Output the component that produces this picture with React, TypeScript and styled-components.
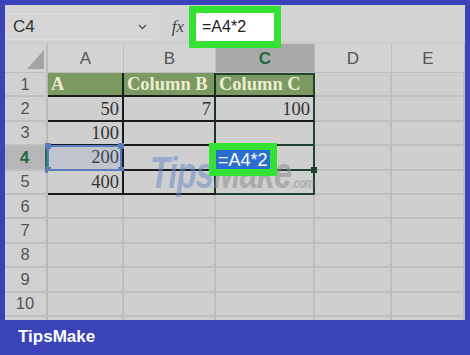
import React from "react";
import styled, { createGlobalStyle, css } from "styled-components";

const GlobalStyle = createGlobalStyle`
  html, body {
    margin: 0;
    padding: 0;
    background: #3a44b8;
  }
  body {
    width: 470px;
    height: 355px;
    overflow: hidden;
    font-family: "Liberation Sans", Arial, sans-serif;
  }
`;

const Frame = styled.div`
  width: 470px;
  height: 355px;
  box-sizing: border-box;
  padding: 5px 5px 0 5px;
  background: #3a44b8;
  display: flex;
  flex-direction: column;
`;

const Window = styled.div`
  height: 315px;
  background: #cfcfcf;
  display: flex;
  flex-direction: column;
  position: relative;
`;

const Toolbar = styled.div`
  height: 39px;
  flex: none;
  box-sizing: border-box;
  display: flex;
  align-items: flex-start;
  padding-top: 8px;
  background: #d4d4d4;
  border-bottom: 3px solid #cdcdcd;
`;

const NameBox = styled.div`
  width: 148px;
  height: 27px;
  box-sizing: border-box;
  display: flex;
  align-items: center;
  justify-content: space-between;
  padding: 0 6px 0 8px;
  background: #d6d6d6;
  border-top: 1px solid #e0e0e0;
  border-bottom: 1px solid #e0e0e0;
  font-size: 17px;
  color: #333;
`;

const FxLabel = styled.div`
  width: 36px;
  height: 27px;
  margin-left: 7px;
  display: flex;
  align-items: center;
  justify-content: center;
  font: italic 17px "Liberation Serif", "Times New Roman", serif;
  color: #444;
`;

const FormulaInput = styled.div`
  width: 78px;
  height: 28px;
  box-sizing: border-box;
  padding-left: 6px;
  background: #fff;
  outline: 7px solid #34e234;
  font-size: 16px;
  line-height: 28px;
  color: #222;
  position: relative;
  z-index: 3;
`;

const Sheet = styled.div`
  flex: 1;
  position: relative;
  overflow: hidden;
  display: grid;
  grid-template-columns: 43px 76px 92px 99px 77px 73px;
  grid-template-rows: 29px repeat(10, 24.4px) 20px;
`;

const Corner = styled.div`
  position: relative;
  background: #d3d3d3;
  border-right: 2px solid #bcbcbc;
  border-bottom: 1px solid #bdbdbd;
  box-sizing: border-box;

  &::after {
    content: "";
    position: absolute;
    right: 2px;
    bottom: 3px;
    width: 0;
    height: 0;
    border-left: 17px solid transparent;
    border-bottom: 19px solid #a4a4a4;
  }
`;

const ColHead = styled.div<{ $active?: boolean }>`
  box-sizing: border-box;
  display: flex;
  align-items: center;
  justify-content: center;
  padding-top: 2px;
  font-size: 17px;
  color: ${(p) => (p.$active ? "#1f6a3b" : "#555")};
  font-weight: ${(p) => (p.$active ? 700 : 400)};
  background: ${(p) => (p.$active ? "#a9a9a9" : "#d3d3d3")};
  border-right: 1px solid #bdbdbd;
  border-bottom: 1px solid #bdbdbd;
`;

const RowHead = styled.div<{ $active?: boolean }>`
  box-sizing: border-box;
  display: flex;
  align-items: center;
  justify-content: center;
  padding-right: 1px;
  font-size: 16.5px;
  color: ${(p) => (p.$active ? "#1f6a3b" : "#555")};
  font-weight: ${(p) => (p.$active ? 700 : 400)};
  background: ${(p) => (p.$active ? "#b6b6b6" : "#d1d1d1")};
  border-bottom: 2px solid #bfbfbf;
  border-right: ${(p) => (p.$active ? "3px solid #217346" : "2px solid #b9b9b9")};
`;

const Cell = styled.div<{ $title?: boolean; $right?: string; $bottom?: string; $top?: boolean }>`
  position: relative;
  box-sizing: border-box;
  display: flex;
  align-items: center;
  justify-content: flex-end;
  padding: 1px 3px 0;
  font: 18.5px "Liberation Serif", "Times New Roman", serif;
  color: #333;
  background: #cfcfcf;
  border-right: ${(p) => p.$right ?? "2px solid #bebebe"};
  border-bottom: ${(p) => p.$bottom ?? "2px solid #bebebe"};
  ${(p) =>
    p.$title &&
    css`
      background: #7b9a61;
      color: #eeebd3;
      font-weight: 700;
      justify-content: flex-start;
    `}
  ${(p) =>
    p.$top &&
    css`
      box-shadow: inset 0 2px 0 #1e4430;
    `}
`;

const Selection = styled.div`
  position: absolute;
  inset: -1px 0 -2px -1px;
  border: 2px solid #5b7dbd;
  background: rgba(120, 150, 210, 0.18);
  pointer-events: none;
`;

const Handle = styled.span<{ $x: "left" | "right"; $y: "top" | "bottom" }>`
  position: absolute;
  width: 6px;
  height: 6px;
  background: #5b7dbd;
  ${(p) => p.$x}: -4px;
  ${(p) => p.$y}: -4px;
`;

const EditText = styled.span`
  position: absolute;
  left: 0;
  top: 4px;
  z-index: 3;
  padding: 0 2px;
  height: 19px;
  line-height: 19px;
  background: #2b6dd0;
  outline: 7px solid #34e234;
  font: 18px "Liberation Sans", Arial, sans-serif;
  color: #fff;
`;

const FillHandle = styled.span`
  position: absolute;
  right: -4px;
  bottom: -4px;
  width: 6px;
  height: 6px;
  background: #1e4430;
  z-index: 2;
`;

const Watermark = styled.div`
  position: absolute;
  left: 145px;
  top: 106px;
  z-index: 2;
  pointer-events: none;
  white-space: nowrap;
  transform: scaleX(0.72);
  transform-origin: left top;
  font: italic 700 45px/45px "Liberation Sans", Arial, sans-serif;
  letter-spacing: -1px;
`;

const MarkTips = styled.span`
  color: rgba(105, 140, 205, 0.55);
`;

const MarkMake = styled.span`
  color: rgba(140, 140, 140, 0.55);
`;

const MarkDomain = styled.span`
  font-size: 15px;
  color: rgba(140, 140, 140, 0.5);
`;

const Footer = styled.div`
  flex: 1;
  display: flex;
  align-items: center;
  padding: 0 0 1px 13px;
  font: 700 17px "Liberation Sans", Arial, sans-serif;
  color: #fff;
`;

const Chevron = () => (
  <svg width="9" height="6" viewBox="0 0 9 6">
    <path d="M1 1l3.5 3.5L8 1" fill="none" stroke="#555" strokeWidth="1.3" />
  </svg>
);

const columns = ["A", "B", "C", "D", "E"];
const titles = ["A", "Column B", "Column C"];
const values: string[][] = [
  ["50", "7", "100"],
  ["100", "", ""],
  ["200", "", ""],
  ["400", "", ""],
];

const BLACK = "2px solid #1c1c1c";
const DARK_GREEN = "2px solid #1e4430";

const App: React.FC = () => {
  const rows = Array.from({ length: 11 }, (_, i) => i + 1);

  return (
    <>
      <GlobalStyle />
      <Frame>
        <Window>
          <Toolbar>
            <NameBox>
              C4
              <Chevron />
            </NameBox>
            <FxLabel>fx</FxLabel>
            <FormulaInput>=A4*2</FormulaInput>
          </Toolbar>
          <Sheet>
            <Corner />
            {columns.map((c) => (
              <ColHead key={c} $active={c === "C"}>
                {c}
              </ColHead>
            ))}
            {rows.map((r) => {
              const inTable = r <= 5;
              return (
                <React.Fragment key={r}>
                  <RowHead $active={r === 4}>{r <= 10 ? r : ""}</RowHead>
                  {columns.map((c, ci) => {
                    if (!inTable || ci > 2) {
                      return <Cell key={c} />;
                    }
                    const right = ci === 0 ? BLACK : ci === 1 ? "2px solid #1d3326" : DARK_GREEN;
                    const bottom = ci === 2 && r >= 3 ? DARK_GREEN : BLACK;
                    if (r === 1) {
                      return (
                        <Cell key={c} $title $right={right} $bottom={bottom} $top={ci === 2}>
                          {titles[ci]}
                        </Cell>
                      );
                    }
                    const text = values[r - 2][ci];
                    return (
                      <Cell key={c} $right={right} $bottom={bottom}>
                        {text}
                        {r === 4 && ci === 0 && (
                          <Selection>
                            <Handle $x="left" $y="top" />
                            <Handle $x="right" $y="top" />
                            <Handle $x="left" $y="bottom" />
                            <Handle $x="right" $y="bottom" />
                          </Selection>
                        )}
                        {r === 4 && ci === 2 && (
                          <>
                            <EditText>=A4*2</EditText>
                            <FillHandle />
                          </>
                        )}
                      </Cell>
                    );
                  })}
                </React.Fragment>
              );
            })}
            <Watermark>
              <MarkTips>Tips</MarkTips>
              <MarkMake>Make</MarkMake>
              <MarkDomain>.com</MarkDomain>
            </Watermark>
          </Sheet>
        </Window>
        <Footer>TipsMake</Footer>
      </Frame>
    </>
  );
};

export default App;
